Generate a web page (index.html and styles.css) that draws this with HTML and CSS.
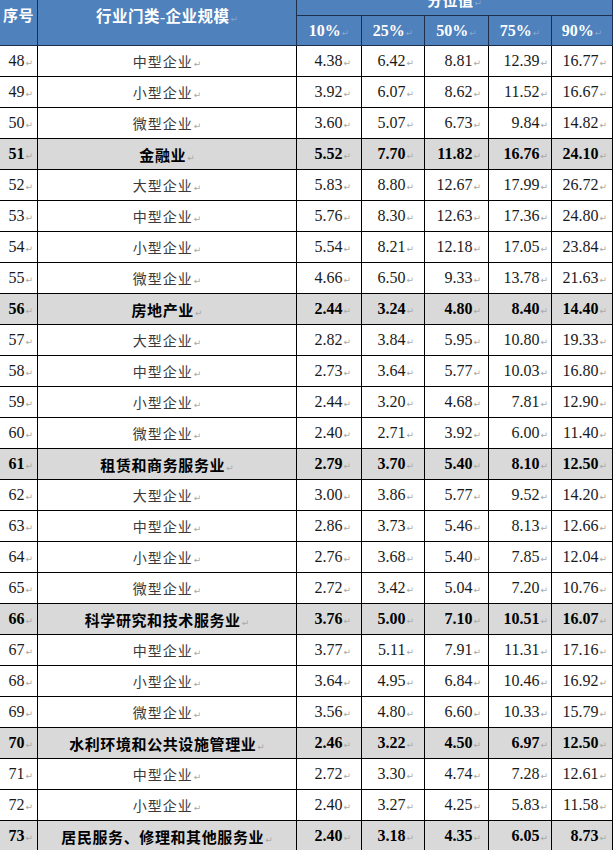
FILE: index.html
```html
<!DOCTYPE html>
<html lang="zh-CN">
<head>
<meta charset="utf-8">
<title>分位值</title>
<link rel="stylesheet" href="styles.css">
</head>
<body>
<table class="tbl">
<colgroup>
<col class="c-no"><col class="c-name"><col class="c-p1"><col class="c-p2"><col class="c-p3"><col class="c-p4"><col class="c-p5">
</colgroup>
<thead>
<tr class="h1">
<th rowspan="2" class="hno">序号</th>
<th rowspan="2" class="hname">行业门类-企业规模<span class="pm">↵</span></th>
<th colspan="5" class="hgroup">分位值<span class="pm">↵</span></th>
</tr>
<tr class="h2">
<th>10%<span class="pm">↵</span></th><th>25%<span class="pm">↵</span></th><th>50%<span class="pm">↵</span></th><th>75%<span class="pm">↵</span></th><th>90%<span class="pm">↵</span></th>
</tr>
</thead>
<tbody>
<tr><td>48<span class="pm">↵</span></td><td class="nm">中型企业<span class="pm">↵</span></td><td>4.38<span class="pm">↵</span></td><td>6.42<span class="pm">↵</span></td><td>8.81<span class="pm">↵</span></td><td>12.39<span class="pm">↵</span></td><td>16.77<span class="pm">↵</span></td></tr>
<tr><td>49<span class="pm">↵</span></td><td class="nm">小型企业<span class="pm">↵</span></td><td>3.92<span class="pm">↵</span></td><td>6.07<span class="pm">↵</span></td><td>8.62<span class="pm">↵</span></td><td>11.52<span class="pm">↵</span></td><td>16.67<span class="pm">↵</span></td></tr>
<tr><td>50<span class="pm">↵</span></td><td class="nm">微型企业<span class="pm">↵</span></td><td>3.60<span class="pm">↵</span></td><td>5.07<span class="pm">↵</span></td><td>6.73<span class="pm">↵</span></td><td>9.84<span class="pm">↵</span></td><td>14.82<span class="pm">↵</span></td></tr>
<tr class="cat"><td>51<span class="pm">↵</span></td><td class="nm">金融业<span class="pm">↵</span></td><td>5.52<span class="pm">↵</span></td><td>7.70<span class="pm">↵</span></td><td>11.82<span class="pm">↵</span></td><td>16.76<span class="pm">↵</span></td><td>24.10<span class="pm">↵</span></td></tr>
<tr><td>52<span class="pm">↵</span></td><td class="nm">大型企业<span class="pm">↵</span></td><td>5.83<span class="pm">↵</span></td><td>8.80<span class="pm">↵</span></td><td>12.67<span class="pm">↵</span></td><td>17.99<span class="pm">↵</span></td><td>26.72<span class="pm">↵</span></td></tr>
<tr><td>53<span class="pm">↵</span></td><td class="nm">中型企业<span class="pm">↵</span></td><td>5.76<span class="pm">↵</span></td><td>8.30<span class="pm">↵</span></td><td>12.63<span class="pm">↵</span></td><td>17.36<span class="pm">↵</span></td><td>24.80<span class="pm">↵</span></td></tr>
<tr><td>54<span class="pm">↵</span></td><td class="nm">小型企业<span class="pm">↵</span></td><td>5.54<span class="pm">↵</span></td><td>8.21<span class="pm">↵</span></td><td>12.18<span class="pm">↵</span></td><td>17.05<span class="pm">↵</span></td><td>23.84<span class="pm">↵</span></td></tr>
<tr><td>55<span class="pm">↵</span></td><td class="nm">微型企业<span class="pm">↵</span></td><td>4.66<span class="pm">↵</span></td><td>6.50<span class="pm">↵</span></td><td>9.33<span class="pm">↵</span></td><td>13.78<span class="pm">↵</span></td><td>21.63<span class="pm">↵</span></td></tr>
<tr class="cat"><td>56<span class="pm">↵</span></td><td class="nm">房地产业<span class="pm">↵</span></td><td>2.44<span class="pm">↵</span></td><td>3.24<span class="pm">↵</span></td><td>4.80<span class="pm">↵</span></td><td>8.40<span class="pm">↵</span></td><td>14.40<span class="pm">↵</span></td></tr>
<tr><td>57<span class="pm">↵</span></td><td class="nm">大型企业<span class="pm">↵</span></td><td>2.82<span class="pm">↵</span></td><td>3.84<span class="pm">↵</span></td><td>5.95<span class="pm">↵</span></td><td>10.80<span class="pm">↵</span></td><td>19.33<span class="pm">↵</span></td></tr>
<tr><td>58<span class="pm">↵</span></td><td class="nm">中型企业<span class="pm">↵</span></td><td>2.73<span class="pm">↵</span></td><td>3.64<span class="pm">↵</span></td><td>5.77<span class="pm">↵</span></td><td>10.03<span class="pm">↵</span></td><td>16.80<span class="pm">↵</span></td></tr>
<tr><td>59<span class="pm">↵</span></td><td class="nm">小型企业<span class="pm">↵</span></td><td>2.44<span class="pm">↵</span></td><td>3.20<span class="pm">↵</span></td><td>4.68<span class="pm">↵</span></td><td>7.81<span class="pm">↵</span></td><td>12.90<span class="pm">↵</span></td></tr>
<tr><td>60<span class="pm">↵</span></td><td class="nm">微型企业<span class="pm">↵</span></td><td>2.40<span class="pm">↵</span></td><td>2.71<span class="pm">↵</span></td><td>3.92<span class="pm">↵</span></td><td>6.00<span class="pm">↵</span></td><td>11.40<span class="pm">↵</span></td></tr>
<tr class="cat"><td>61<span class="pm">↵</span></td><td class="nm">租赁和商务服务业<span class="pm">↵</span></td><td>2.79<span class="pm">↵</span></td><td>3.70<span class="pm">↵</span></td><td>5.40<span class="pm">↵</span></td><td>8.10<span class="pm">↵</span></td><td>12.50<span class="pm">↵</span></td></tr>
<tr><td>62<span class="pm">↵</span></td><td class="nm">大型企业<span class="pm">↵</span></td><td>3.00<span class="pm">↵</span></td><td>3.86<span class="pm">↵</span></td><td>5.77<span class="pm">↵</span></td><td>9.52<span class="pm">↵</span></td><td>14.20<span class="pm">↵</span></td></tr>
<tr><td>63<span class="pm">↵</span></td><td class="nm">中型企业<span class="pm">↵</span></td><td>2.86<span class="pm">↵</span></td><td>3.73<span class="pm">↵</span></td><td>5.46<span class="pm">↵</span></td><td>8.13<span class="pm">↵</span></td><td>12.66<span class="pm">↵</span></td></tr>
<tr><td>64<span class="pm">↵</span></td><td class="nm">小型企业<span class="pm">↵</span></td><td>2.76<span class="pm">↵</span></td><td>3.68<span class="pm">↵</span></td><td>5.40<span class="pm">↵</span></td><td>7.85<span class="pm">↵</span></td><td>12.04<span class="pm">↵</span></td></tr>
<tr><td>65<span class="pm">↵</span></td><td class="nm">微型企业<span class="pm">↵</span></td><td>2.72<span class="pm">↵</span></td><td>3.42<span class="pm">↵</span></td><td>5.04<span class="pm">↵</span></td><td>7.20<span class="pm">↵</span></td><td>10.76<span class="pm">↵</span></td></tr>
<tr class="cat"><td>66<span class="pm">↵</span></td><td class="nm">科学研究和技术服务业<span class="pm">↵</span></td><td>3.76<span class="pm">↵</span></td><td>5.00<span class="pm">↵</span></td><td>7.10<span class="pm">↵</span></td><td>10.51<span class="pm">↵</span></td><td>16.07<span class="pm">↵</span></td></tr>
<tr><td>67<span class="pm">↵</span></td><td class="nm">中型企业<span class="pm">↵</span></td><td>3.77<span class="pm">↵</span></td><td>5.11<span class="pm">↵</span></td><td>7.91<span class="pm">↵</span></td><td>11.31<span class="pm">↵</span></td><td>17.16<span class="pm">↵</span></td></tr>
<tr><td>68<span class="pm">↵</span></td><td class="nm">小型企业<span class="pm">↵</span></td><td>3.64<span class="pm">↵</span></td><td>4.95<span class="pm">↵</span></td><td>6.84<span class="pm">↵</span></td><td>10.46<span class="pm">↵</span></td><td>16.92<span class="pm">↵</span></td></tr>
<tr><td>69<span class="pm">↵</span></td><td class="nm">微型企业<span class="pm">↵</span></td><td>3.56<span class="pm">↵</span></td><td>4.80<span class="pm">↵</span></td><td>6.60<span class="pm">↵</span></td><td>10.33<span class="pm">↵</span></td><td>15.79<span class="pm">↵</span></td></tr>
<tr class="cat"><td>70<span class="pm">↵</span></td><td class="nm">水利环境和公共设施管理业<span class="pm">↵</span></td><td>2.46<span class="pm">↵</span></td><td>3.22<span class="pm">↵</span></td><td>4.50<span class="pm">↵</span></td><td>6.97<span class="pm">↵</span></td><td>12.50<span class="pm">↵</span></td></tr>
<tr><td>71<span class="pm">↵</span></td><td class="nm">中型企业<span class="pm">↵</span></td><td>2.72<span class="pm">↵</span></td><td>3.30<span class="pm">↵</span></td><td>4.74<span class="pm">↵</span></td><td>7.28<span class="pm">↵</span></td><td>12.61<span class="pm">↵</span></td></tr>
<tr><td>72<span class="pm">↵</span></td><td class="nm">小型企业<span class="pm">↵</span></td><td>2.40<span class="pm">↵</span></td><td>3.27<span class="pm">↵</span></td><td>4.25<span class="pm">↵</span></td><td>5.83<span class="pm">↵</span></td><td>11.58<span class="pm">↵</span></td></tr>
<tr class="cat"><td>73<span class="pm">↵</span></td><td class="nm">居民服务、修理和其他服务业<span class="pm">↵</span></td><td>2.40<span class="pm">↵</span></td><td>3.18<span class="pm">↵</span></td><td>4.35<span class="pm">↵</span></td><td>6.05<span class="pm">↵</span></td><td>8.73<span class="pm">↵</span></td></tr>
</tbody>
</table>
</body>
</html>
```
FILE: styles.css
```css
html, body {
  margin: 0;
  padding: 0;
  background: #ffffff;
  overflow: hidden;
}

body {
  width: 616px;
  height: 850px;
  font-family: "Liberation Serif", "Noto Sans CJK SC", serif;
}

.tbl {
  border-collapse: collapse;
  table-layout: fixed;
  width: 613px;
  margin-top: -17px;
  margin-left: -1px;
}

.c-no { width: 38px; }
.c-name { width: 259px; }
.c-p1 { width: 65px; }
.c-p2 { width: 63px; }
.c-p3 { width: 64px; }
.c-p4 { width: 63px; }
.c-p5 { width: 61px; }

.tbl th,
.tbl td {
  border: 1px solid #000000;
  padding: 0;
  box-sizing: border-box;
  white-space: nowrap;
  overflow: hidden;
}

.tbl th {
  background: #4f81bd;
  color: #ffffff;
  font-weight: bold;
  text-align: center;
  border-color: #1c2f4c;
}

.h1 th { height: 32px; }
.h2 th { height: 30px; font-size: 16px; }

.hno,
.hname,
.hgroup {
  font-size: 15px;
  letter-spacing: 0.5px;
}

.hname { font-size: 15.5px; }

.hgroup { vertical-align: middle; }

.tbl td {
  height: 31px;
  font-size: 16px;
  color: #1a1a1a;
  text-align: right;
  vertical-align: middle;
}

.tbl td:nth-child(1) { padding-right: 4px; }
.tbl td:nth-child(3) { padding-right: 10px; }
.tbl td:nth-child(4) { padding-right: 10px; }
.tbl td:nth-child(5) { padding-right: 7px; }
.tbl td:nth-child(6) { padding-right: 3px; }
.tbl td:nth-child(7) { padding-right: 5px; }

.tbl td.nm {
  text-align: center;
  font-size: 14px;
  letter-spacing: 1px;
  color: #3a3a3a;
  padding-right: 0;
}

.cat td {
  background: #d9d9d9;
  font-weight: bold;
  color: #000000;
}

.cat td.nm {
  font-size: 15px;
  letter-spacing: 0.6px;
  color: #000000;
}

.pm {
  font-family: "DejaVu Sans", sans-serif;
  font-size: 9px;
  font-weight: normal;
  color: #a8a8a8;
  letter-spacing: 0;
  margin-left: 1px;
}

.tbl th .pm {
  color: rgba(255, 255, 255, 0.3);
}
```
